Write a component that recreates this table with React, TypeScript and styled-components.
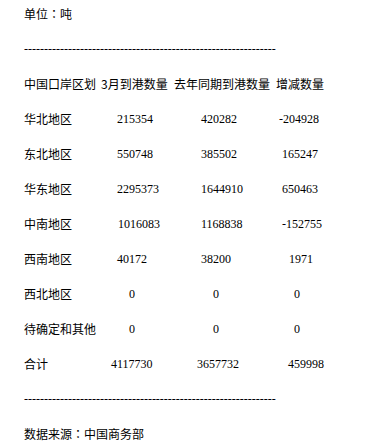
import React from 'react';
import styled, { createGlobalStyle } from 'styled-components';

const GlobalStyle = createGlobalStyle`
  html, body {
    margin: 0;
    padding: 0;
    background: #ffffff;
  }
`;

const Page = styled.div`
  display: flex;
  flex-direction: column;
  gap: 11px;
  padding: 2px 0 0 24px;
  color: #000;
  font-family: 'Noto Sans CJK SC', 'Noto Sans', sans-serif;
  font-size: 12px;
`;

const Line = styled.div`
  height: 24px;
  line-height: 24px;
  white-space: nowrap;
`;

// full-width colon with centred dots, like the reference
const Colon = styled.span`
  font-family: 'Noto Sans CJK TC', sans-serif;
`;

const Dashes = styled.div`
  height: 24px;
  line-height: 24px;
  width: 252px;
  overflow: hidden;
  white-space: nowrap;
  font-family: 'Liberation Serif', serif;
  font-size: 12px;
`;

const Row = styled.div`
  display: grid;
  grid-template-columns: 77px 73px 102px auto;
  height: 24px;
  line-height: 24px;
  white-space: nowrap;
`;

const Label = styled.span`
  font-family: 'Noto Sans CJK SC', sans-serif;
`;

const Num = styled.span<{ $indent: number }>`
  padding-left: ${(p) => p.$indent}px;
  font-family: 'Liberation Serif', 'Times New Roman', serif;
  font-size: 12px;
`;

// column starts: 24, 101, 174, 276 (the header positions)
const colStart = [101, 174, 276];

const rows: [string, [string, number][]][] = [
  ['华北地区', [['215354', 117], ['420282', 201], ['-204928', 279]]],
  ['东北地区', [['550748', 117], ['385502', 201], ['165247', 282]]],
  ['华东地区', [['2295373', 117], ['1644910', 201], ['650463', 282]]],
  ['中南地区', [['1016083', 118], ['1168838', 201], ['-152755', 282]]],
  ['西南地区', [['40172', 117], ['38200', 201], ['1971', 289]]],
  ['西北地区', [['0', 129], ['0', 213], ['0', 294]]],
  ['待确定和其他', [['0', 129], ['0', 213], ['0', 294]]],
  ['合计', [['4117730', 111], ['3657732', 197], ['459998', 288]]],
];

const dashLine = '-'.repeat(63);

const App = () => {
  return (
    <>
      <GlobalStyle />
      <Page>
        <Line>
          单位<Colon>：</Colon>吨
        </Line>
        <Dashes>{dashLine}</Dashes>
        <Row>
          <Label>中国口岸区划</Label>
          <Label>3月到港数量</Label>
          <Label>去年同期到港数量</Label>
          <Label>增减数量</Label>
        </Row>
        {rows.map(([name, cells]) => (
          <Row key={name}>
            <Label>{name}</Label>
            {cells.map(([v, x], i) => (
              <Num key={i} $indent={x - colStart[i]}>
                {v}
              </Num>
            ))}
          </Row>
        ))}
        <Dashes>{dashLine}</Dashes>
        <Line>
          数据来源<Colon>：</Colon>中国商务部
        </Line>
      </Page>
    </>
  );
};

export default App;
